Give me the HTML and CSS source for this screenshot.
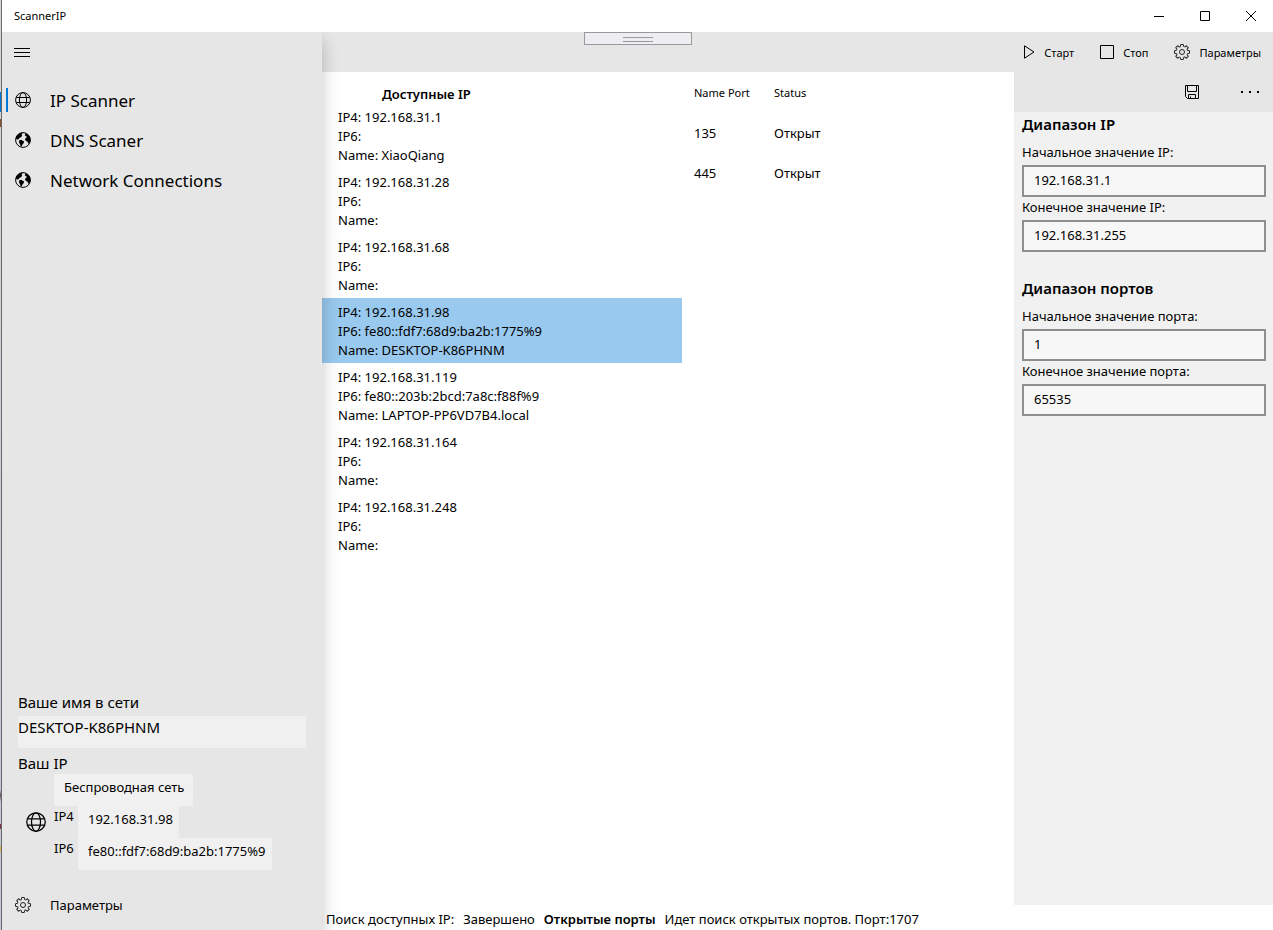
FILE: index.html
```
<!DOCTYPE html>
<html lang="ru">
<head>
<meta charset="utf-8">
<meta name="viewport" content="width=device-width, initial-scale=1">
<title>ScannerIP</title>
<link rel="stylesheet" href="styles.css">
</head>
<body>
<svg class="sprite" aria-hidden="true">
  <symbol id="globe" viewBox="0 0 16 16"><g fill="none" stroke="currentColor"><circle cx="8" cy="8" r="7.4"/><ellipse cx="8" cy="8" rx="3.6" ry="7.4"/><path d="M1.2 5.5h13.6M1.2 10.5h13.6"/></g></symbol>
  <symbol id="earth" viewBox="0 0 16 16"><circle cx="8" cy="8" r="7.4" fill="none" stroke="currentColor"/><path fill="currentColor" d="M5 1.2 7.2.8 7.4 2 6.4 2.8 7.2 3.8 6 5.2 4.4 6 3.6 7.2 2.6 7.4.8 7 1.2 4.4 2.8 2.4ZM4.2 8.2 6.2 7.8 9 9.4 8.8 11 7.6 12.2 6.8 14.2 5.6 14.4 5.2 12.4 4 10.6ZM10.4 1.2 12.8 2.4 14.8 4.6 15.4 8 14.8 10.6 13.2 11.8 12.4 9.6 10.6 8.8 10 7.4 10.8 5.8 12 5.2 11 4 9.8 3.4Z"/></symbol>
  <symbol id="gear" viewBox="-8 -8 16 16"><g fill="none" stroke="currentColor" stroke-linejoin="round"><circle r="2.5"/><path id="tooth" d="M5.6-1.6 7.5-1.3V1.3L5.6 1.6Q4.7 2.1 5.09 2.83"/><use href="#tooth" transform="rotate(45)"/><use href="#tooth" transform="rotate(90)"/><use href="#tooth" transform="rotate(135)"/><use href="#tooth" transform="rotate(180)"/><use href="#tooth" transform="rotate(225)"/><use href="#tooth" transform="rotate(270)"/><use href="#tooth" transform="rotate(315)"/></g></symbol>
</svg>
<div class="desktop-edge"></div>
<div class="window">
  <header class="titlebar">
    <span class="title">ScannerIP</span>
    <button class="caption" aria-label="Свернуть"><svg viewBox="0 0 10 10"><path d="M0 5.5h10"/></svg></button>
    <button class="caption" aria-label="Развернуть"><svg viewBox="0 0 10 10"><path d="M.5.5h9v9h-9z"/></svg></button>
    <button class="caption" aria-label="Закрыть"><svg viewBox="0 0 10 10"><path d="m0 0 10 10M10 0 0 10"/></svg></button>
  </header>
  <div class="shell">
    <aside class="sidebar">
      <button class="menu" aria-label="Меню"><svg viewBox="0 0 16 9"><path d="M0 .5h16M0 4.5h16M0 8.5h16"/></svg></button>
      <nav class="nav">
        <a class="nav-item active" href="#scanner"><svg><use href="#globe"/></svg><span>IP Scanner</span></a>
        <a class="nav-item" href="#dns"><svg><use href="#earth"/></svg><span>DNS Scaner</span></a>
        <a class="nav-item" href="#network"><svg><use href="#earth"/></svg><span>Network Connections</span></a>
      </nav>
      <section class="host">
        <label class="host-label" for="host">Ваше имя в сети</label>
        <input class="host-name" id="host" value="DESKTOP-K86PHNM" readonly>
        <h2 class="host-label own-ip">Ваш IP</h2>
        <div class="adapter">
          <svg class="adapter-icon"><use href="#globe"/></svg>
          <div class="adapter-info">
            <input class="chip adapter-name" value="Беспроводная сеть" aria-label="Адаптер" readonly>
            <div class="address"><label for="own4">IP4</label><input class="chip chip-v4" id="own4" value="192.168.31.98" readonly></div>
            <div class="address"><label for="own6">IP6</label><input class="chip chip-v6" id="own6" value="fe80::fdf7:68d9:ba2b:1775%9" readonly></div>
          </div>
        </div>
      </section>
      <a class="nav-item settings" href="#settings"><svg class="gear"><use href="#gear"/></svg>Параметры</a>
    </aside>
    <main class="content">
      <div class="commands">
        <button class="command"><svg class="play" viewBox="0 0 11 14"><path d="M.5.8v12.4L10 7z"/></svg>Старт</button>
        <button class="command"><svg class="stop" viewBox="0 0 14 14"><path d="M.5.5h13v13H.5z"/></svg>Стоп</button>
        <button class="command"><svg class="gear"><use href="#gear"/></svg>Параметры</button>
      </div>
      <div class="work">
        <section class="hosts">
          <h2>Доступные IP</h2>
          <ul>
            <li>IP4: 192.168.31.1<br>IP6:<br>Name: XiaoQiang</li>
            <li>IP4: 192.168.31.28<br>IP6:<br>Name:</li>
            <li>IP4: 192.168.31.68<br>IP6:<br>Name:</li>
            <li class="selected">IP4: 192.168.31.98<br>IP6: fe80::fdf7:68d9:ba2b:1775%9<br>Name: DESKTOP-K86PHNM</li>
            <li>IP4: 192.168.31.119<br>IP6: fe80::203b:2bcd:7a8c:f88f%9<br>Name: LAPTOP-PP6VD7B4.local</li>
            <li>IP4: 192.168.31.164<br>IP6:<br>Name:</li>
            <li>IP4: 192.168.31.248<br>IP6:<br>Name:</li>
          </ul>
        </section>
        <section class="ports">
          <table>
            <thead><tr><th>Name Port</th><th>Status</th></tr></thead>
            <tbody><tr><td>135</td><td>Открыт</td></tr><tr><td>445</td><td>Открыт</td></tr></tbody>
          </table>
        </section>
        <form class="panel">
          <div class="panel-bar">
            <button type="button" class="icon-button" aria-label="Сохранить"><svg class="save" viewBox="0 0 14 14"><path d="M.5.5h13v13h-11l-2-2zM2.5.5v6h9v-6M3.5 13.5v-4h7v4M5.5 13.5v-2"/></svg></button>
            <button type="button" class="icon-button more" aria-label="Ещё"><svg viewBox="0 0 18 2"><path d="M0 0h2v2H0zM8 0h2v2H8zM16 0h2v2h-2z"/></svg></button>
          </div>
          <fieldset>
            <legend>Диапазон IP</legend>
            <label for="ip-from">Начальное значение IP:</label><input id="ip-from" value="192.168.31.1">
            <label for="ip-to">Конечное значение IP:</label><input id="ip-to" value="192.168.31.255">
          </fieldset>
          <fieldset>
            <legend>Диапазон портов</legend>
            <label for="port-from">Начальное значение порта:</label><input id="port-from" value="1">
            <label for="port-to">Конечное значение порта:</label><input id="port-to" value="65535">
          </fieldset>
        </form>
      </div>
      <footer class="status"><span>Поиск доступных IP:</span><span>Завершено</span><strong>Открытые порты</strong><span>Идет поиск открытых портов. Порт:1707</span></footer>
    </main>
  </div>
  <div class="grip"></div>
</div>
</body>
</html>
```
FILE: styles.css
```
* { box-sizing: border-box; }

body {
  margin: 0;
  min-height: 100vh;
  display: flex;
  background: #fff;
  color: #000;
  font: 13px/19px "Noto Sans", "Open Sans", sans-serif;
}

button, input { font: inherit; color: inherit; border: 0; border-radius: 0; padding: 0; margin: 0; }
button { background: none; }
a { color: inherit; text-decoration: none; }
h2 { margin: 0; }
svg { width: 16px; height: 16px; flex: none; display: block; }
.sprite { position: absolute; width: 0; height: 0; }
.gear { color: #222; }

/* Sliver of the desktop visible beside the window */
.desktop-edge {
  width: 2px;
  flex: none;
  border-right: 1px solid #686868;
  background: linear-gradient(#d5d5dc 92px, #0078d7 92px, #0078d7 112px, #d5d5dc 112px, #d5d5dc 119px, #8a4a20 119px, #8a4a20 127px, #d5d5dc 127px, #c4c8d4 790px, #665060 795px, #c4c8d4 802px, #c4c8d4 824px, #803050 824px, #803050 829px, #c4c8d4 829px, #c4c8d4 846px, #d0b860 846px, #d0b860 852px, #c4c8d4 852px);
}

.window { flex: 1; min-width: 0; display: flex; flex-direction: column; position: relative; }

.titlebar { display: flex; height: 32px; align-items: center; padding-left: 12px; font-size: 11px; }
.title { flex: 1; padding-bottom: 2px; }
.caption { width: 46px; height: 32px; display: grid; place-items: center; }
.caption:last-child { width: 45px; padding-left: 1px; }
.caption svg { width: 10px; height: 10px; }
.caption path, .menu path, .play path, .stop path, .save path { fill: none; stroke: #000; }

.shell { flex: 1; display: grid; grid-template-columns: 320px 1fr; }

.sidebar {
  display: flex;
  flex-direction: column;
  padding-bottom: 5px;
  background: #e6e6e6;
  box-shadow: 0 8px 16px rgba(0, 0, 0, .24);
  clip-path: inset(0 -20px 0 0);
  z-index: 1;
}
.menu { height: 40px; width: 40px; padding-left: 12px; margin-bottom: 8px; }
.menu svg { height: 9px; }
.nav-item { display: flex; align-items: center; gap: 19px; height: 40px; padding-left: 13px; font-size: 17px; line-height: 24px; }
.nav-item span { padding-top: 2px; }
.active { background: linear-gradient(#0078d7, #0078d7) 4px center / 2px 24px no-repeat; }
.settings { font-size: 13px; }

.host { margin-top: auto; padding: 0 16px 15px; }
.host-label { display: block; padding-bottom: 1px; font-size: 15px; font-weight: 400; line-height: 25px; }
.host-name { display: block; width: 100%; height: 32px; padding-bottom: 10px; background: #f0f0f0; font-size: 15px; }
.own-ip { padding: 5px 0 0; line-height: 21px; }
.adapter { display: flex; align-items: center; gap: 8px; padding-left: 8px; }
.adapter-icon { width: 20px; height: 20px; }
.chip { display: block; height: 32px; padding: 0 4px 6px 10px; background: #f0f0f0; }
.adapter-name { width: 139px; }
.address { display: flex; gap: 4px; }
.address label { width: 20px; padding-top: 1px; }
.chip-v4 { width: 101px; }
.chip-v6 { width: 194px; }

.content { display: flex; flex-direction: column; min-width: 0; }
.commands { display: flex; justify-content: flex-end; align-items: center; gap: 26px; height: 40px; padding-right: 12px; background: #e6e6e6; font-size: 11px; }
.command { display: flex; align-items: center; gap: 9px; }
.play { width: 11px; height: 14px; }
.stop, .save { width: 14px; height: 14px; }

.work { flex: 1; display: grid; grid-template-columns: 360px 1fr 259px; }
.hosts { padding-top: 13px; }
.hosts h2 { padding-left: 60px; font-size: 13px; font-weight: 600; line-height: 18px; }
.hosts ul { list-style: none; margin: 0; padding: 0; }
.hosts li { padding: 5px 16px 3px; }
.hosts .selected { background: #99c9ef; }

.ports table { border-collapse: collapse; }
.ports th, .ports td { width: 80px; height: 40px; padding: 0 0 0 12px; text-align: left; white-space: nowrap; }
.ports th { font-size: 11px; font-weight: 400; }
.ports td { padding-top: 2px; }
.ports th + th, .ports td + td { padding-left: 0; }
.ports th:first-child { width: 92px; }

.panel { background: #f1f1f1; }
.panel-bar { display: flex; justify-content: flex-end; height: 40px; padding-right: 1px; background: #e6e6e6; }
.icon-button { width: 72px; display: grid; place-items: center; }
.more { width: 44px; }
.more svg { width: 18px; height: 2px; }
fieldset { border: 0; margin: 0; padding: 0 7px 24px 8px; min-width: 0; }
legend { padding: 0; margin-bottom: 6px; font-size: 15px; font-weight: 600; line-height: 24px; }
fieldset label { display: block; padding-top: 1px; margin-bottom: 3px; }
fieldset input { display: block; width: 100%; height: 32px; padding: 0 10px 2px; border: 2px solid #8f8f8f; background: #f7f7f7; }

.status { display: flex; gap: 9px; height: 25px; padding: 5px 4px 0; white-space: nowrap; }
.status strong { font-weight: 600; }

.grip {
  position: absolute;
  top: 32px;
  left: 50%;
  transform: translateX(-50%);
  width: 108px;
  height: 13px;
  border: 1px solid #999;
  background: #eeeef2;
}
.grip::after { content: ""; position: absolute; left: 38px; top: 4px; width: 30px; height: 3px; border: solid #999; border-width: 1px 0; }
```
